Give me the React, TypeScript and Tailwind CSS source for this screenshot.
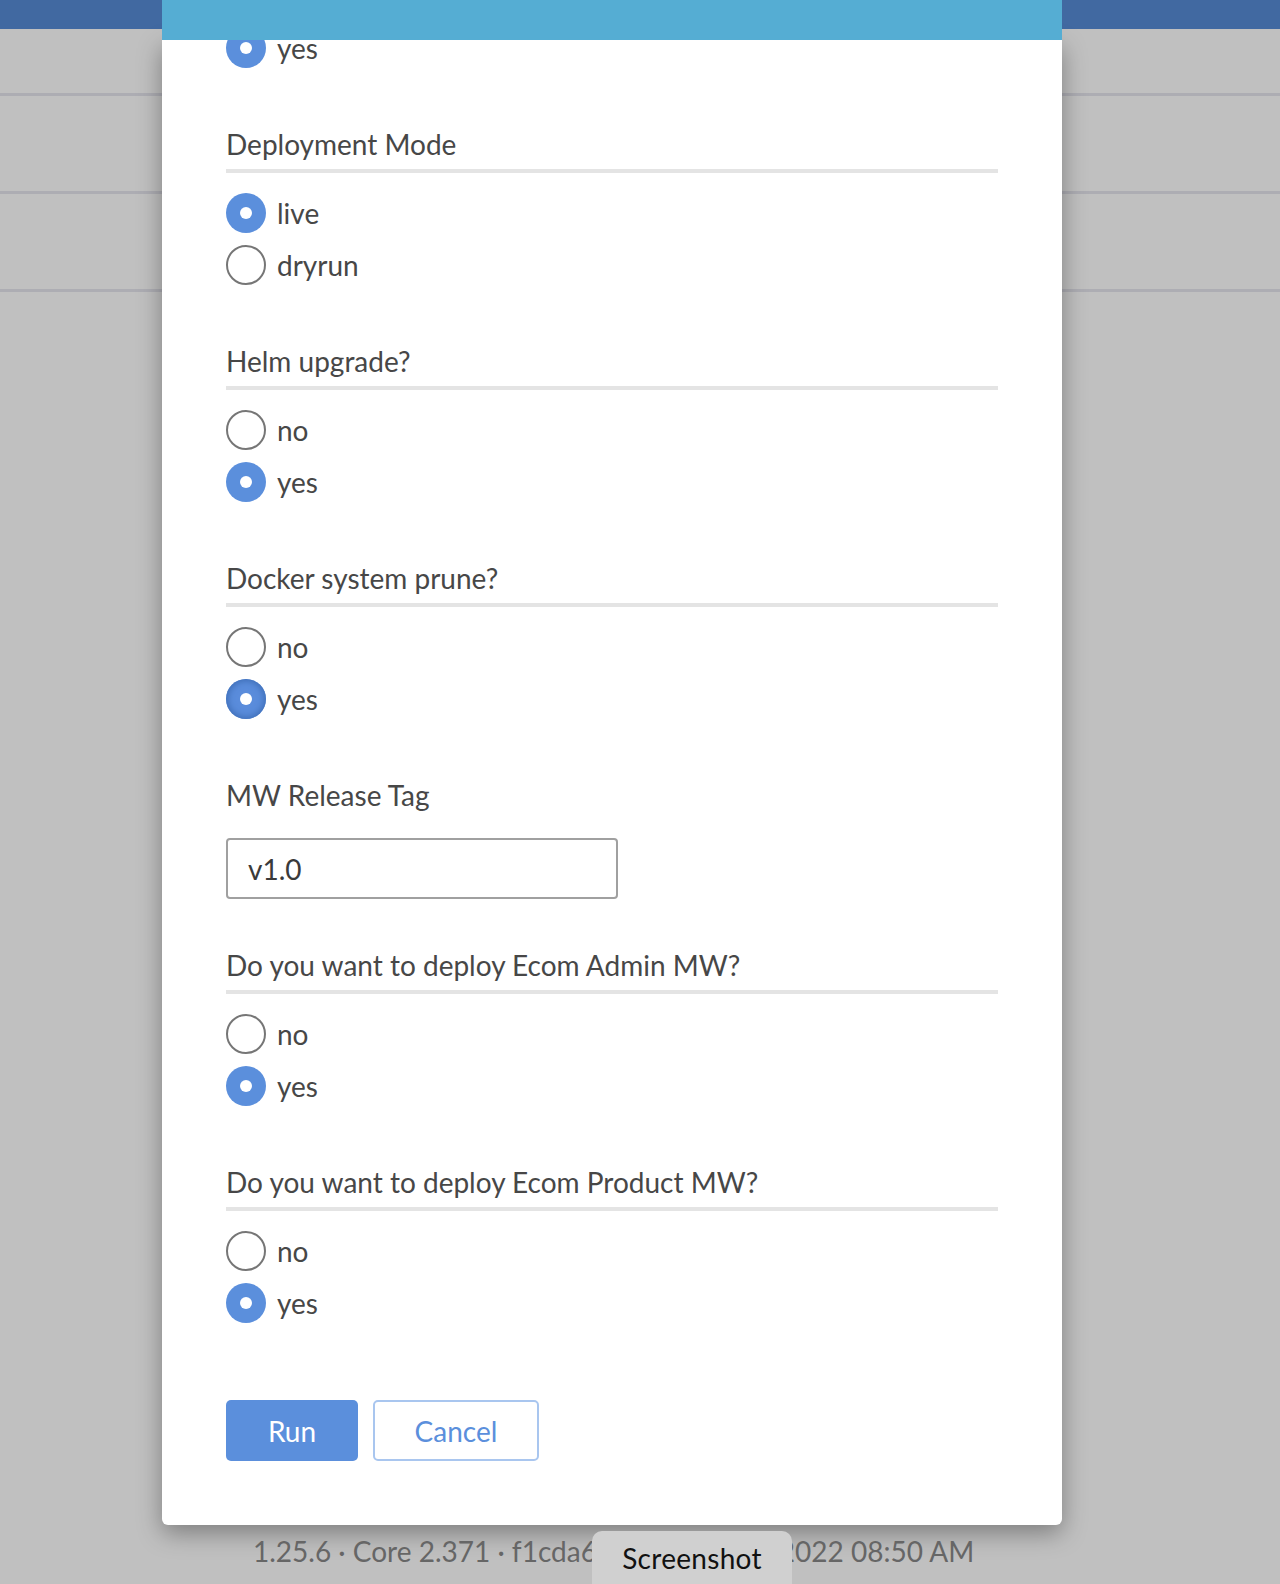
import React from "react";

const FONT = { fontFamily: "Lato, 'Open Sans', sans-serif" };

type Option = { label: string; checked?: boolean; focused?: boolean };

function Radio({ label, checked, focused }: Option) {
  return (
    <div className="flex h-[52px] items-center gap-[11px]">
      {checked ? (
        <span
          className={
            focused
              ? "flex h-10 w-10 items-center justify-center rounded-full bg-[#5a8cdb] shadow-[inset_0_0_6px_2px_#3f6fb8]"
              : "flex h-10 w-10 items-center justify-center rounded-full bg-[#5b8fdc]"
          }
        >
          <span className="h-3 w-3 rounded-full bg-white" />
        </span>
      ) : (
        <span className="h-10 w-10 rounded-full border-2 border-[#767676] bg-white" />
      )}
      <span className="text-[28px] leading-9 text-[#474747]">{label}</span>
    </div>
  );
}

function RadioGroup({ title, options }: { title: string; options: Option[] }) {
  return (
    <div className="mt-[52px]">
      <div className="text-[28px] leading-9 text-[#474747]">{title}</div>
      <div className="mt-[7px] h-1 bg-[#e4e4e4]" />
      <div className="mt-[14px]">
        {options.map((o) => (
          <Radio key={o.label} {...o} />
        ))}
      </div>
    </div>
  );
}

export default function App() {
  return (
    <div className="relative h-[1584px] w-[1280px] overflow-hidden bg-[#c0c0c0]" style={FONT}>
      {/* page behind the overlay */}
      <div className="h-[29px] bg-[#4169a1]" />
      <div className="h-[67px] border-b-[3px] border-[#adadb3]" />
      <div className="h-[98px] border-b-[3px] border-[#adadb3]" />
      <div className="h-[98px] border-b-[3px] border-[#adadb3]" />

      {/* modal */}
      <div className="absolute left-[162px] top-0 flex w-[900px] flex-col">
        <div className="relative z-10 h-10 bg-[#55add3]" />
        <div className="overflow-hidden rounded-b-md bg-white shadow-[0_8px_24px_rgba(0,0,0,0.35)]">
          <div className="-mt-[18px] px-16 pb-16">
            <Radio label="yes" checked />

            <RadioGroup
              title="Deployment Mode"
              options={[{ label: "live", checked: true }, { label: "dryrun" }]}
            />
            <RadioGroup
              title="Helm upgrade?"
              options={[{ label: "no" }, { label: "yes", checked: true }]}
            />
            <RadioGroup
              title="Docker system prune?"
              options={[{ label: "no" }, { label: "yes", checked: true, focused: true }]}
            />

            <div className="mt-[52px]">
              <div className="text-[28px] leading-9 text-[#474747]">MW Release Tag</div>
              <div className="mt-[25px] flex h-[61px] w-[392px] items-center rounded-[4px] border-2 border-[#a0a0a0] px-5 text-[28px] text-[#3a3a3a]">
                v1.0
              </div>
            </div>

            <div className="-mt-[4px]">
              <RadioGroup
                title="Do you want to deploy Ecom Admin MW?"
                options={[{ label: "no" }, { label: "yes", checked: true }]}
              />
            </div>
            <RadioGroup
              title="Do you want to deploy Ecom Product MW?"
              options={[{ label: "no" }, { label: "yes", checked: true }]}
            />

            <div className="mt-[71px] flex gap-[15px]">
              <button className="h-[61px] w-[132px] rounded-[5px] bg-[#5b8fdc] text-[28px] text-white">
                Run
              </button>
              <button className="h-[61px] w-[166px] rounded-[5px] border-2 border-[#a9c6ef] bg-white text-[28px] text-[#5b8fdc]">
                Cancel
              </button>
            </div>
          </div>
        </div>

        <div className="mt-[8px] pl-[91px] text-[28px] leading-9 text-[#666666]">
          1.25.6 · Core 2.371 · f1cda6bc · 21 March, 2022 08:50 AM
        </div>
      </div>

      <div className="absolute left-[592px] top-[1531px] flex h-[53px] w-[200px] items-center justify-center rounded-t-[10px] bg-[#d0d0d0] text-[28px] tracking-[0.3px] text-[#111111]">
        Screenshot
      </div>
    </div>
  );
}
